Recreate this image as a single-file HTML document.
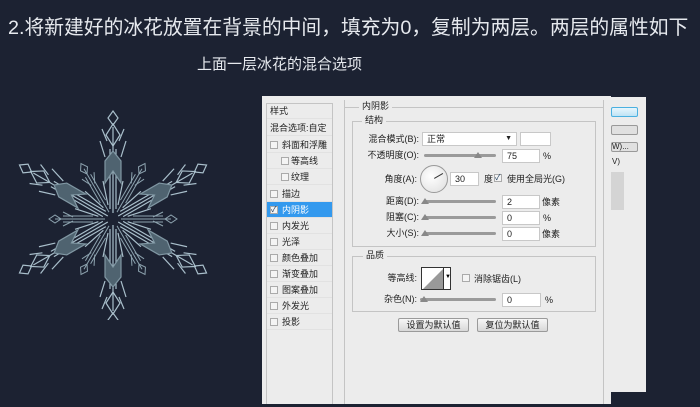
<!DOCTYPE html>
<html><head><meta charset="utf-8"><style>
*{margin:0;padding:0;box-sizing:border-box}
body{width:700px;height:407px;background:#1c2232;position:relative;overflow:hidden;font-family:"Liberation Sans","Noto Sans CJK SC",sans-serif}
.a{position:absolute;white-space:nowrap}
.t{color:#e6e9ee}
.d{font-size:9px;color:#222;line-height:12px}
.r{position:absolute;white-space:nowrap;right:281px;font-size:9px;color:#222;line-height:12px}
.cb{position:absolute;width:8px;height:8px;border:1px solid #aaa;background:#f4f4f4}
.row{position:absolute;left:267px;width:65px;height:16px;border-bottom:1px solid #e2e2e2;font-size:9px;line-height:16px;color:#222;white-space:nowrap;overflow:hidden}
.in{position:absolute;height:14px;background:#fff;border:1px solid #c8c8c8;font-size:9px;line-height:12px;padding-left:4px;color:#222}
.sl{position:absolute;height:3px;background:#9a9a9a;border-radius:2px}
.th{position:absolute;width:0;height:0;border-left:4px solid transparent;border-right:4px solid transparent;border-bottom:6px solid #888}
.fs{position:absolute;border:1px solid #c4c4c4}
.btn{position:absolute;height:14px;border:1px solid #9a9a9a;border-radius:2px;background:linear-gradient(#f6f6f6,#d8d8d8);font-size:9px;line-height:12px;text-align:center;color:#222}
</style></head><body>
<div class="a t" style="left:8px;top:11px;font-size:19.8px">2.将新建好的冰花放置在背景的中间，填充为0，复制为两层。两层的属性如下</div>
<div class="a t" style="left:197px;top:53px;font-size:15px">上面一层冰花的混合选项</div>

<svg class="a" style="left:0;top:90px" width="260" height="230" viewBox="0 90 260 230">
<defs>
<g id="arm" stroke="#a9bfcb" stroke-width="1.2" fill="none">
<line x1="0" y1="-6" x2="0" y2="-92"/>
<line x1="-3" y1="-10" x2="-3" y2="-70"/><line x1="3" y1="-10" x2="3" y2="-70"/>
<path d="M-8,-36 L0,-48 L8,-36 L8,-58 L0,-68 L-8,-58Z" fill="#4f6370" stroke="#8097a3"/>
<path d="M0,-108 L5,-101 L0,-94 L-5,-101Z"/>
<path d="M0,-95 L7,-84 L0,-73 L-7,-84Z"/>
<line x1="-6" y1="-78" x2="-11" y2="-90"/><line x1="6" y1="-78" x2="11" y2="-90"/>
<line x1="-8" y1="-62" x2="-13" y2="-78"/><line x1="8" y1="-62" x2="13" y2="-78"/>
<line x1="-5" y1="-14" x2="-10" y2="-38"/><line x1="5" y1="-14" x2="10" y2="-38"/>
</g>
<g id="sub" stroke="#8ea4b0" stroke-width="1" fill="none">
<line x1="0" y1="-8" x2="0" y2="-58"/>
<line x1="-3" y1="-20" x2="-3" y2="-50"/><line x1="3" y1="-20" x2="3" y2="-50"/>
<path d="M0,-64 L4,-58 L0,-52 L-4,-58Z"/>
<line x1="-2" y1="-40" x2="-7" y2="-50"/><line x1="2" y1="-40" x2="7" y2="-50"/>
</g>
</defs>
<g transform="translate(113,219)">
<use href="#arm"/><use href="#arm" transform="rotate(60)"/><use href="#arm" transform="rotate(120)"/><use href="#arm" transform="rotate(180)"/><use href="#arm" transform="rotate(240)"/><use href="#arm" transform="rotate(300)"/>
<use href="#sub" transform="rotate(30)"/><use href="#sub" transform="rotate(90)"/><use href="#sub" transform="rotate(150)"/><use href="#sub" transform="rotate(210)"/><use href="#sub" transform="rotate(270)"/><use href="#sub" transform="rotate(330)"/>
</g>
</svg>

<div class="a" style="left:605px;top:97px;width:41px;height:295px;background:#ececec"></div>
<div class="a" style="left:611px;top:107px;width:27px;height:10px;border:1px solid #4ab0e0;border-radius:2px;background:linear-gradient(#e8f6fd,#bfe3f5)"></div>
<div class="a" style="left:611px;top:125px;width:27px;height:10px;border:1px solid #999;border-radius:2px;background:#e0e0e0"></div>
<div class="a" style="left:611px;top:142px;width:27px;height:10px;border:1px solid #999;border-radius:2px;background:#e0e0e0;font-size:8px;line-height:8px;color:#222">W)...</div>
<div class="a" style="left:612px;top:157px;font-size:8px;color:#222">V)</div>
<div class="a" style="left:611px;top:172px;width:13px;height:38px;background:#d4d4d4"></div>

<div class="a" style="left:262px;top:96px;width:349px;height:308px;background:#ececec"></div>
<div class="a" style="left:266px;top:103px;width:67px;height:301px;border:1px solid #c4c4c4;border-bottom:none;background:#ececec"></div>
<div class="a" style="left:344px;top:100px;width:1px;height:304px;background:#c4c4c4"></div>
<div class="a" style="left:603px;top:100px;width:1px;height:304px;background:#c4c4c4"></div>
<div class="row" style="top:103px;padding-left:3px">样式</div>
<div class="row" style="top:120px;padding-left:3px">混合选项:自定</div>
<div class="row" style="top:137px;padding-left:15px">斜面和浮雕</div><div class="cb" style="left:270px;top:141px"></div>
<div class="row" style="top:153px;padding-left:24px">等高线</div><div class="cb" style="left:281px;top:157px"></div>
<div class="row" style="top:169px;padding-left:24px">纹理</div><div class="cb" style="left:281px;top:173px"></div>
<div class="row" style="top:186px;padding-left:15px">描边</div><div class="cb" style="left:270px;top:190px"></div>
<div class="row" style="top:202px;padding-left:15px;background:#3399ee;color:#fff">内阴影</div><div class="cb" style="left:270px;top:206px;font-size:8px;line-height:6px;color:#135">✓</div>
<div class="row" style="top:218px;padding-left:15px">内发光</div><div class="cb" style="left:270px;top:222px"></div>
<div class="row" style="top:234px;padding-left:15px">光泽</div><div class="cb" style="left:270px;top:238px"></div>
<div class="row" style="top:250px;padding-left:15px">颜色叠加</div><div class="cb" style="left:270px;top:254px"></div>
<div class="row" style="top:266px;padding-left:15px">渐变叠加</div><div class="cb" style="left:270px;top:270px"></div>
<div class="row" style="top:282px;padding-left:15px">图案叠加</div><div class="cb" style="left:270px;top:286px"></div>
<div class="row" style="top:298px;padding-left:15px">外发光</div><div class="cb" style="left:270px;top:302px"></div>
<div class="row" style="top:314px;padding-left:15px">投影</div><div class="cb" style="left:270px;top:318px"></div>

<div class="fs" style="left:345px;top:107px;width:258px;height:1px;border:none;background:#c4c4c4"></div>
<div class="a d" style="left:359px;top:100px;background:#ececec;padding:0 3px">内阴影</div>
<div class="fs" style="left:352px;top:121px;width:244px;height:126px"></div>
<div class="a d" style="left:362px;top:114px;background:#ececec;padding:0 3px">结构</div>

<div class="r" style="top:133px">混合模式(B):</div>
<div class="in" style="left:422px;top:132px;width:95px">正常<span style="position:absolute;right:4px;top:0;font-size:7px">▼</span></div>
<div class="in" style="left:520px;top:132px;width:31px"></div>
<div class="r" style="top:149px">不透明度(O):</div>
<div class="sl" style="left:424px;top:154px;width:72px"></div><div class="th" style="left:474px;top:152px"></div>
<div class="in" style="left:502px;top:149px;width:38px">75</div><div class="a d" style="left:543px;top:150px">%</div>
<div class="r" style="top:173px;right:283px">角度(A):</div>
<div class="a" style="left:420px;top:165px;width:28px;height:28px;border-radius:50%;border:1px solid #999;background:radial-gradient(circle at 40% 40%,#fff,#ddd)"></div>
<div class="a" style="left:434px;top:178px;width:10px;height:1px;background:#333;transform-origin:0 0;transform:rotate(-30deg)"></div>
<div class="in" style="left:450px;top:172px;width:29px">30</div>
<div class="a d" style="left:484px;top:173px">度</div>
<div class="cb" style="left:494px;top:174px;font-size:8px;line-height:6px;color:#135">✓</div>
<div class="a d" style="left:507px;top:173px">使用全局光(G)</div>
<div class="r" style="top:195px">距离(D):</div>
<div class="sl" style="left:424px;top:200px;width:72px"></div><div class="th" style="left:421px;top:198px"></div>
<div class="in" style="left:502px;top:195px;width:38px">2</div><div class="a d" style="left:542px;top:196px">像素</div>
<div class="r" style="top:211px">阻塞(C):</div>
<div class="sl" style="left:424px;top:216px;width:72px"></div><div class="th" style="left:421px;top:214px"></div>
<div class="in" style="left:502px;top:211px;width:38px">0</div><div class="a d" style="left:543px;top:212px">%</div>
<div class="r" style="top:227px">大小(S):</div>
<div class="sl" style="left:424px;top:232px;width:72px"></div><div class="th" style="left:421px;top:230px"></div>
<div class="in" style="left:502px;top:227px;width:38px">0</div><div class="a d" style="left:542px;top:228px">像素</div>

<div class="fs" style="left:352px;top:256px;width:244px;height:56px"></div>
<div class="a d" style="left:363px;top:249px;background:#ececec;padding:0 3px">品质</div>
<div class="r" style="top:272px;right:283px">等高线:</div>
<div class="a" style="left:421px;top:267px;width:30px;height:23px;border:1px solid #333;background:#fff"><svg width="21" height="21" style="position:absolute;left:0;top:0"><path d="M1,21 L21,1 L21,21Z" fill="#999"/></svg><div style="position:absolute;left:21px;top:0;width:1px;height:21px;background:#333"></div><div style="position:absolute;left:23px;top:6px;font-size:6px">▼</div></div>
<div class="cb" style="left:462px;top:274px"></div>
<div class="a d" style="left:474px;top:273px">消除锯齿(L)</div>
<div class="r" style="top:293px;right:283px">杂色(N):</div>
<div class="sl" style="left:420px;top:298px;width:76px"></div><div class="th" style="left:420px;top:296px"></div>
<div class="in" style="left:502px;top:293px;width:39px">0</div><div class="a d" style="left:545px;top:294px">%</div>

<div class="btn" style="left:398px;top:318px;width:71px">设置为默认值</div>
<div class="btn" style="left:477px;top:318px;width:71px">复位为默认值</div>
</body></html>
